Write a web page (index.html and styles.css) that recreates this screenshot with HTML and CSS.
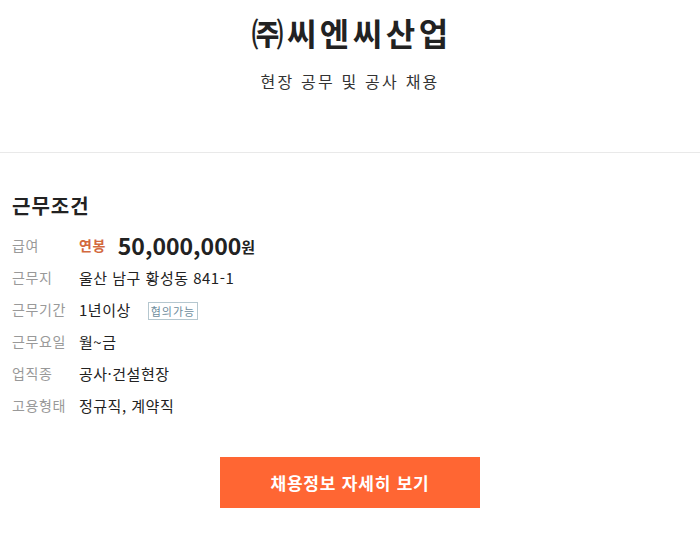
FILE: index.html
```html
<!DOCTYPE html>
<html lang="ko">
<head>
<meta charset="utf-8">
<link rel="stylesheet" href="styles.css">
</head>
<body>
<header class="head">
  <h1 class="company">㈜씨엔씨산업</h1>
  <p class="job">현장 공무 및 공사 채용</p>
</header>
<section class="cond">
  <h2 class="cond-title">근무조건</h2>
  <dl class="rows">
    <div class="row"><dt>급여</dt><dd><span class="pay-type">연봉</span><span class="pay">50,000,000</span><span class="won">원</span></dd></div>
    <div class="row"><dt>근무지</dt><dd>울산 남구 황성동 841-1</dd></div>
    <div class="row"><dt>근무기간</dt><dd>1년이상<span class="badge">협의가능</span></dd></div>
    <div class="row"><dt>근무요일</dt><dd>월~금</dd></div>
    <div class="row"><dt>업직종</dt><dd>공사·건설현장</dd></div>
    <div class="row"><dt>고용형태</dt><dd>정규직, 계약직</dd></div>
  </dl>
  <div class="btn-wrap"><a class="btn">채용정보 자세히 보기</a></div>
</section>
</body>
</html>
```
FILE: styles.css
```css
* { box-sizing: border-box; }
html, body { margin: 0; padding: 0; background: #fff; }
body {
  font-family: "Noto Sans CJK KR", "Noto Sans", sans-serif;
  color: #222;
  width: 700px;
}
.head {
  text-align: center;
  padding-top: 10px;
  height: 153px;
  border-bottom: 1px solid #e9e9e9;
}
.company {
  margin: 0;
  font-size: 32px;
  font-weight: 700;
  line-height: 44px;
  color: #222;
  letter-spacing: 3.5px;
  padding-left: 3px;
}
.job {
  margin: 17px 0 0;
  font-size: 16px;
  line-height: 20px;
  color: #333;
  letter-spacing: 2.2px;
}
.cond { padding: 38px 12px 0; }
.cond-title {
  margin: 0;
  font-size: 20px;
  font-weight: 700;
  line-height: 30px;
  color: #222;
  letter-spacing: 1px;
}
.rows { margin: 8px 0 0; }
.row {
  display: flex;
  align-items: center;
  height: 32px;
}
.row dt {
  width: 67px;
  font-size: 14px;
  color: #999;
  letter-spacing: 0.6px;
}
.row dd {
  margin: 0;
  font-size: 15px;
  color: #222;
  display: flex;
  align-items: center;
  letter-spacing: 0.5px;
}
.pay-type {
  color: #d3693e;
  font-weight: 700;
  font-size: 14px;
  margin-right: 12px;
  letter-spacing: 0.5px;
}
.pay {
  font-size: 23px;
  font-weight: 700;
  color: #222;
  letter-spacing: 0;
}
.won { font-weight: 700; font-size: 15px; margin-top: 3px; }
.badge {
  margin-left: 17px;
  font-size: 11px;
  color: #6d8c9c;
  border: 1px solid #b5c7cf;
  padding: 0 2px;
  line-height: 16px;
  margin-top: 3px;
  letter-spacing: 1px;
}
.btn-wrap {
  display: flex;
  justify-content: center;
  margin-top: 36px;
}
.btn {
  width: 260px;
  height: 51px;
  background: #ff6633;
  color: #fff;
  font-size: 17px;
  font-weight: 700;
  letter-spacing: 0.8px;
  display: flex;
  align-items: center;
  justify-content: center;
}
```
